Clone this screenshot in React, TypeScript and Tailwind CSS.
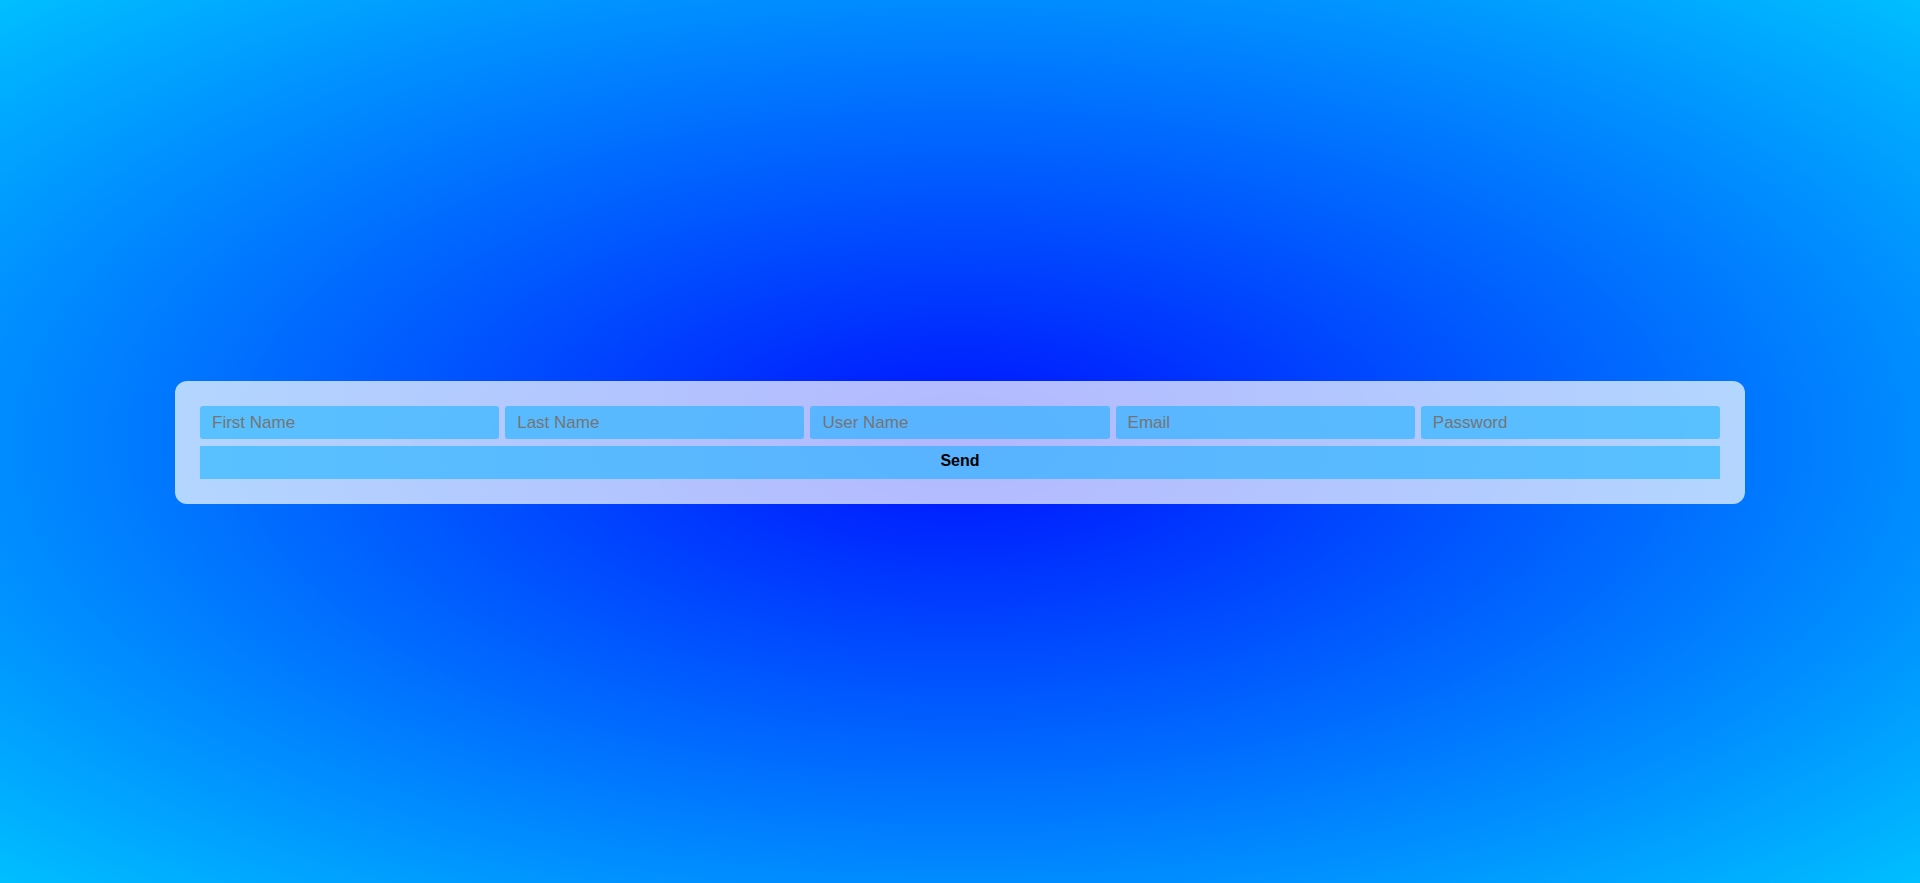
export default function App() {
  const fields = ["First Name", "Last Name", "User Name", "Email", "Password"];

  return (
    <div className="flex min-h-screen w-full items-center justify-center bg-[radial-gradient(#0010ff,#00bfff)] font-['Liberation_Sans',Arial,sans-serif]">
      {/* form card */}
      <form
        className="mt-[1px] flex w-[1570px] flex-col gap-[7px] rounded-xl bg-white/70 p-[25px]"
        onSubmit={(e) => e.preventDefault()}
      >
        <div className="flex gap-[6px]">
          {fields.map((f) => (
            <input
              key={f}
              type={f === "Password" ? "password" : f === "Email" ? "email" : "text"}
              placeholder={f}
              className="h-[33px] min-w-0 flex-1 rounded-[3px] bg-[#00aeff]/50 px-[12px] pt-[1px] text-[17px] text-black outline-none placeholder:text-[#757575]"
            />
          ))}
        </div>
        <button
          type="submit"
          className="h-[33px] w-full bg-[#00aeff]/50 pb-[3px] text-[16px] font-bold text-black"
        >
          Send
        </button>
      </form>
    </div>
  );
}
